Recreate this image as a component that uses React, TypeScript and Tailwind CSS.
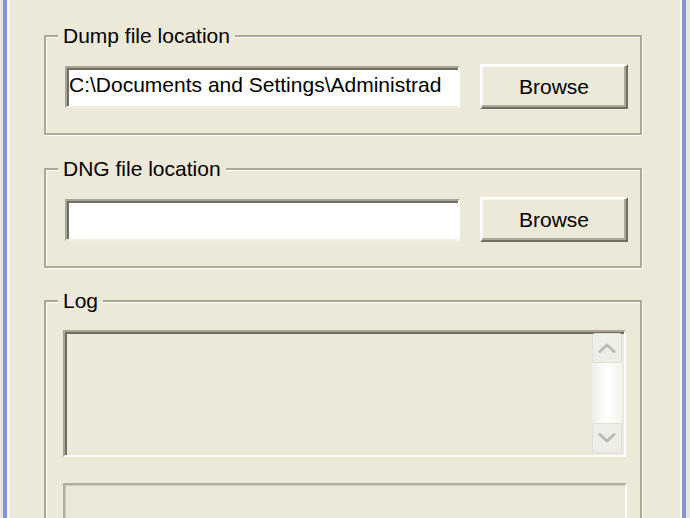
import type { ReactNode } from 'react';

const font = "font-['Liberation_Sans',Arial,sans-serif]";

function GroupBox({ label, className = '', children }: { label: string; className?: string; children: ReactNode }) {
  return (
    <fieldset
      className={`m-0 min-w-0 px-0 pb-[24px] border-2 border-[#ACA899] shadow-[inset_1px_1px_0_#fff,1px_1px_0_#fff] ${className}`}
    >
      <legend className="ml-[12px] px-[5px] bg-[#ECE9D8] text-[21px] leading-[24px] text-black">{label}</legend>
      {children}
    </fieldset>
  );
}

function PathField({ value }: { value: string }) {
  return (
    <input
      readOnly
      value={value}
      className="w-[395px] h-[42px] bg-white pl-[2px] pb-[3px] text-[21px] text-black outline-none border-2 border-t-[#A7A597] border-l-[#A7A597] border-r-white border-b-[#F1EFE2] shadow-[inset_2px_2px_0_#706E63]"
    />
  );
}

function BrowseButton() {
  return (
    <button className="w-[148px] h-[45px] bg-[#ECE9D8] text-[21px] leading-none text-black border-2 border-t-white border-l-white border-r-[#716F64] border-b-[#716F64] shadow-[inset_-2px_-2px_0_#ACA899,inset_1px_1px_0_#F7F6F0]">
      Browse
    </button>
  );
}

function Chevron({ up }: { up?: boolean }) {
  return (
    <svg width="18" height="10" viewBox="0 0 18 10" fill="none">
      <polyline
        points={up ? '2,8.5 9,2 16,8.5' : '2,1.5 9,8 16,1.5'}
        stroke="#BDBCB4"
        strokeWidth="3"
        strokeLinecap="round"
        strokeLinejoin="round"
      />
    </svg>
  );
}

function ScrollButton({ up }: { up?: boolean }) {
  return (
    <div className="h-[30px] flex items-center justify-center rounded-[3px] border border-[#E2E0D6] bg-[#EEEDE7]">
      <Chevron up={up} />
    </div>
  );
}

export default function App() {
  return (
    <div className={`${font} w-[690px] h-[518px] overflow-hidden flex bg-[#ECE9D8]`}>
      {/* window frame left */}
      <div className="w-[3px] bg-[#E6E5DE]" />
      <div className="w-[4px] bg-[#8496CB]" />
      <div className="w-[3px] bg-[#F8F7F2]" />

      <div className="w-[670px] pl-[34px] pt-[24px]">
        <GroupBox label="Dump file location" className="w-[598px]">
          <div className="mt-[16px] pl-[19px] flex items-center gap-[20px]">
            <PathField value="C:\Documents and Settings\Administrad" />
            <BrowseButton />
          </div>
        </GroupBox>

        <GroupBox label="DNG file location" className="w-[598px] mt-[22px]">
          <div className="mt-[16px] pl-[19px] flex items-center gap-[20px]">
            <PathField value="" />
            <BrowseButton />
          </div>
        </GroupBox>

        <GroupBox label="Log" className="w-[598px] mt-[21px]">
          <div className="pt-[17px] pl-[17px]">
            <div className="w-[563px] h-[127px] flex justify-end pt-[1px] pr-[2px] pb-[2px] bg-[#ECE9D8] border-2 border-t-[#A7A597] border-l-[#A7A597] border-r-white border-b-white shadow-[inset_2px_2px_0_#706E63]">
              <div className="w-[30px] flex flex-col">
                <ScrollButton up />
                <div className="flex-1 bg-linear-to-r from-[#EFEEE8] via-white to-[#F3F2EC]" />
                <ScrollButton />
              </div>
            </div>
            <div className="mt-[26px] w-[564px] h-[60px] bg-[#EBE8DA] border-2 border-t-[#B0AE9F] border-l-[#B0AE9F] border-r-white border-b-white shadow-[inset_1px_1px_0_#CFCDC0]" />
          </div>
        </GroupBox>
      </div>

      {/* window frame right */}
      <div className="w-[2px] bg-[#F6F5EF]" />
      <div className="w-[4px] bg-[#8496CB]" />
      <div className="w-[4px] bg-[#E6E5DE]" />
    </div>
  );
}
